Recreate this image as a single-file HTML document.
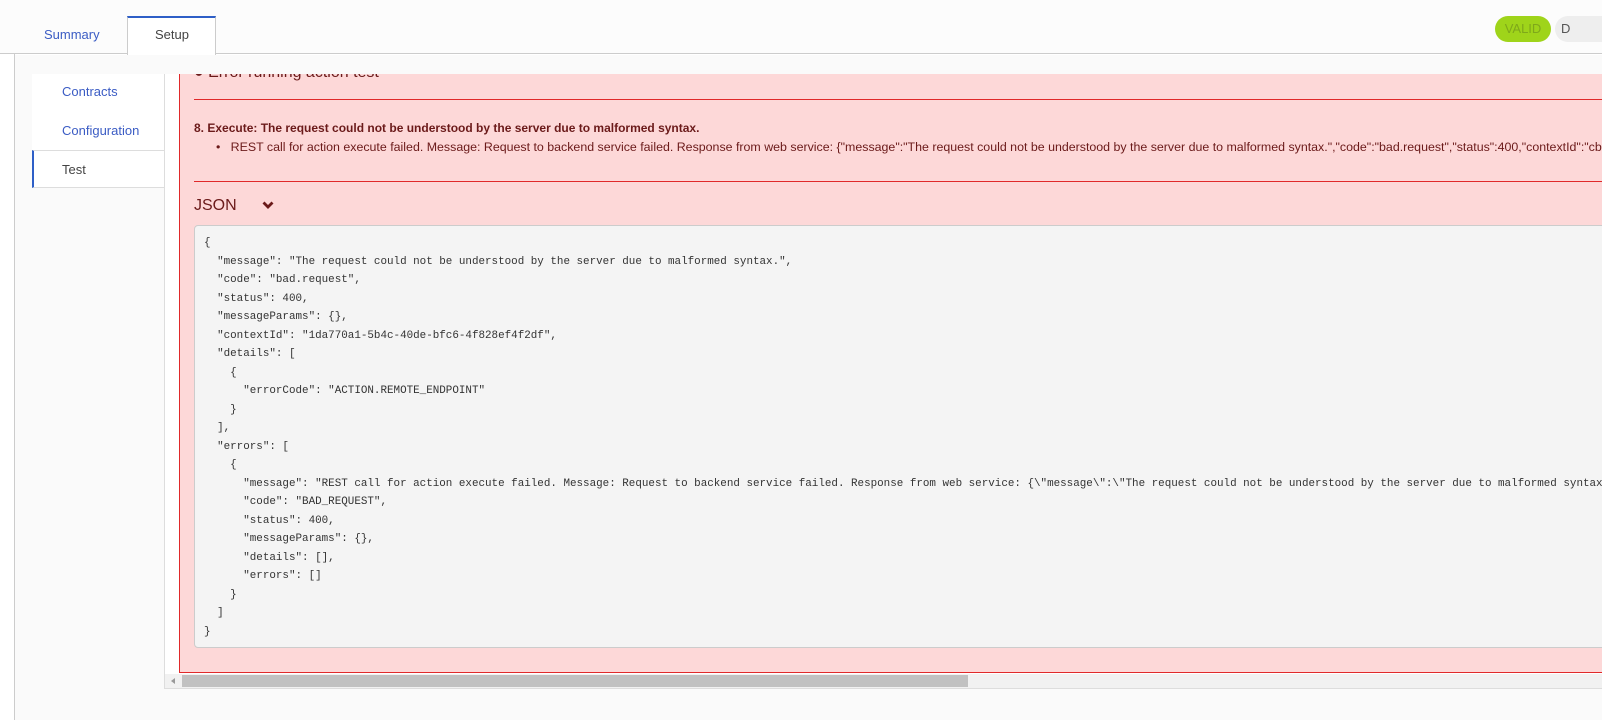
<!DOCTYPE html>
<html><head><meta charset="utf-8"><style>
*{margin:0;padding:0;box-sizing:border-box}
body{width:1602px;height:720px;overflow:hidden;background:#fff;font-family:"Liberation Sans",Arial,sans-serif;position:relative}
.abs{position:absolute}
.code{font-family:"Liberation Mono",monospace;font-size:10.9px;color:#333;white-space:pre;line-height:18.5px}
.dr{color:#6b1a1a}
</style></head><body>
<div class="abs" style="left:0;top:0;width:1602px;height:54px;background:#fcfcfc;border-bottom:1px solid #ccc"></div>
<div class="abs" style="left:14px;top:54px;width:1px;height:666px;background:#ccc"></div>
<div class="abs" style="left:15px;top:55px;width:1587px;height:665px;background:#fafafa"></div>
<div class="abs" style="left:44px;top:27px;font-size:13px;color:#3b5cc4">Summary</div>
<div class="abs" style="left:127px;top:16px;width:89px;height:39px;background:#fff;border:1px solid #ccc;border-top:2px solid #2e5fc7;border-bottom:none"></div>
<div class="abs" style="left:155px;top:27px;font-size:13px;color:#444">Setup</div>
<div class="abs" style="left:1495px;top:16px;width:56px;height:26px;border-radius:13px;background:#9fd41a;color:#7fa81a;font-size:13px;line-height:26px;text-align:center">VALID</div>
<div class="abs" style="left:1555px;top:16px;width:60px;height:26px;border-radius:13px;background:#eee;color:#555;font-size:13px;line-height:26px;padding-left:6px">D</div>
<!-- left nav -->
<div class="abs" style="left:32px;top:74px;width:133px;height:76px;background:#fff;border-right:1px solid #ddd"></div>
<div class="abs" style="left:62px;top:84px;font-size:13px;color:#3b5cc4">Contracts</div>
<div class="abs" style="left:62px;top:123px;font-size:13px;color:#3b5cc4">Configuration</div>
<div class="abs" style="left:32px;top:150px;width:133px;height:38px;background:#fff;border-left:2px solid #2e5fc7;border-top:1px solid #ddd;border-bottom:1px solid #ddd"></div>
<div class="abs" style="left:62px;top:162px;font-size:13px;color:#444">Test</div>
<div class="abs" style="left:164px;top:188px;width:1px;height:500px;background:#ddd"></div>
<!-- content -->
<div class="abs" style="left:164px;top:74px;width:1438px;height:615px;background:#fff;border-left:1px solid #ddd;border-bottom:1px solid #ddd;overflow:hidden">
 <div class="abs" style="left:14px;top:-10px;width:1500px;height:609px;background:#fdd8d8;border-left:1px solid #e0292a;border-bottom:1px solid #e0292a">
  <div class="abs dr" style="left:14px;top:0;font-size:16px;color:#6b1a1a">&#9679; Error running action test</div>
  <div class="abs" style="left:14px;top:35px;width:1490px;height:1px;background:#e0292a"></div>
  <div class="abs dr" style="left:14px;top:57px;font-size:12px;font-weight:bold">8. Execute: The request could not be understood by the server due to malformed syntax.</div>
  <div class="abs dr" style="left:36px;top:76px;font-size:12.4px;white-space:nowrap">•&nbsp;&nbsp; REST call for action execute failed. Message: Request to backend service failed. Response from web service: {"message":"The request could not be understood by the server due to malformed syntax.","code":"bad.request","status":400,"contextId":"cb</div>
  <div class="abs" style="left:14px;top:117px;width:1490px;height:1px;background:#e0292a"></div>
  <div class="abs dr" style="left:14px;top:133px;font-size:16px">JSON</div>
  <svg class="abs" style="left:82px;top:136px" width="12" height="10" viewBox="0 0 12 10"><path d="M1.5 2.5 L6 7 L10.5 2.5" stroke="#6b1a1a" stroke-width="2.8" fill="none"/></svg>
  <div class="abs" style="left:14px;top:161px;width:1490px;height:423px;background:#f4f4f4;border:1px solid #ccc;border-radius:4px">
<div class="abs code" style="left:9px;top:8px">{
  "message": "The request could not be understood by the server due to malformed syntax.",
  "code": "bad.request",
  "status": 400,
  "messageParams": {},
  "contextId": "1da770a1-5b4c-40de-bfc6-4f828ef4f2df",
  "details": [
    {
      "errorCode": "ACTION.REMOTE_ENDPOINT"
    }
  ],
  "errors": [
    {
      "message": "REST call for action execute failed. Message: Request to backend service failed. Response from web service: {\"message\":\"The request could not be understood by the server due to malformed syntax.\",
      "code": "BAD_REQUEST",
      "status": 400,
      "messageParams": {},
      "details": [],
      "errors": []
    }
  ]
}</div>
  </div>
 </div>
 <div class="abs" style="left:0;top:600px;width:1438px;height:14px;background:#f1f1f1"></div>
 <div class="abs" style="left:6px;top:604px;width:0;height:0;border-top:3px solid transparent;border-bottom:3px solid transparent;border-right:4px solid #999"></div>
 <div class="abs" style="left:17px;top:601px;width:786px;height:12px;background:#c1c1c1"></div>
</div>
<div class="abs" style="left:15px;top:689px;width:150px;height:31px;background:#fafafa"></div>
</body></html>
